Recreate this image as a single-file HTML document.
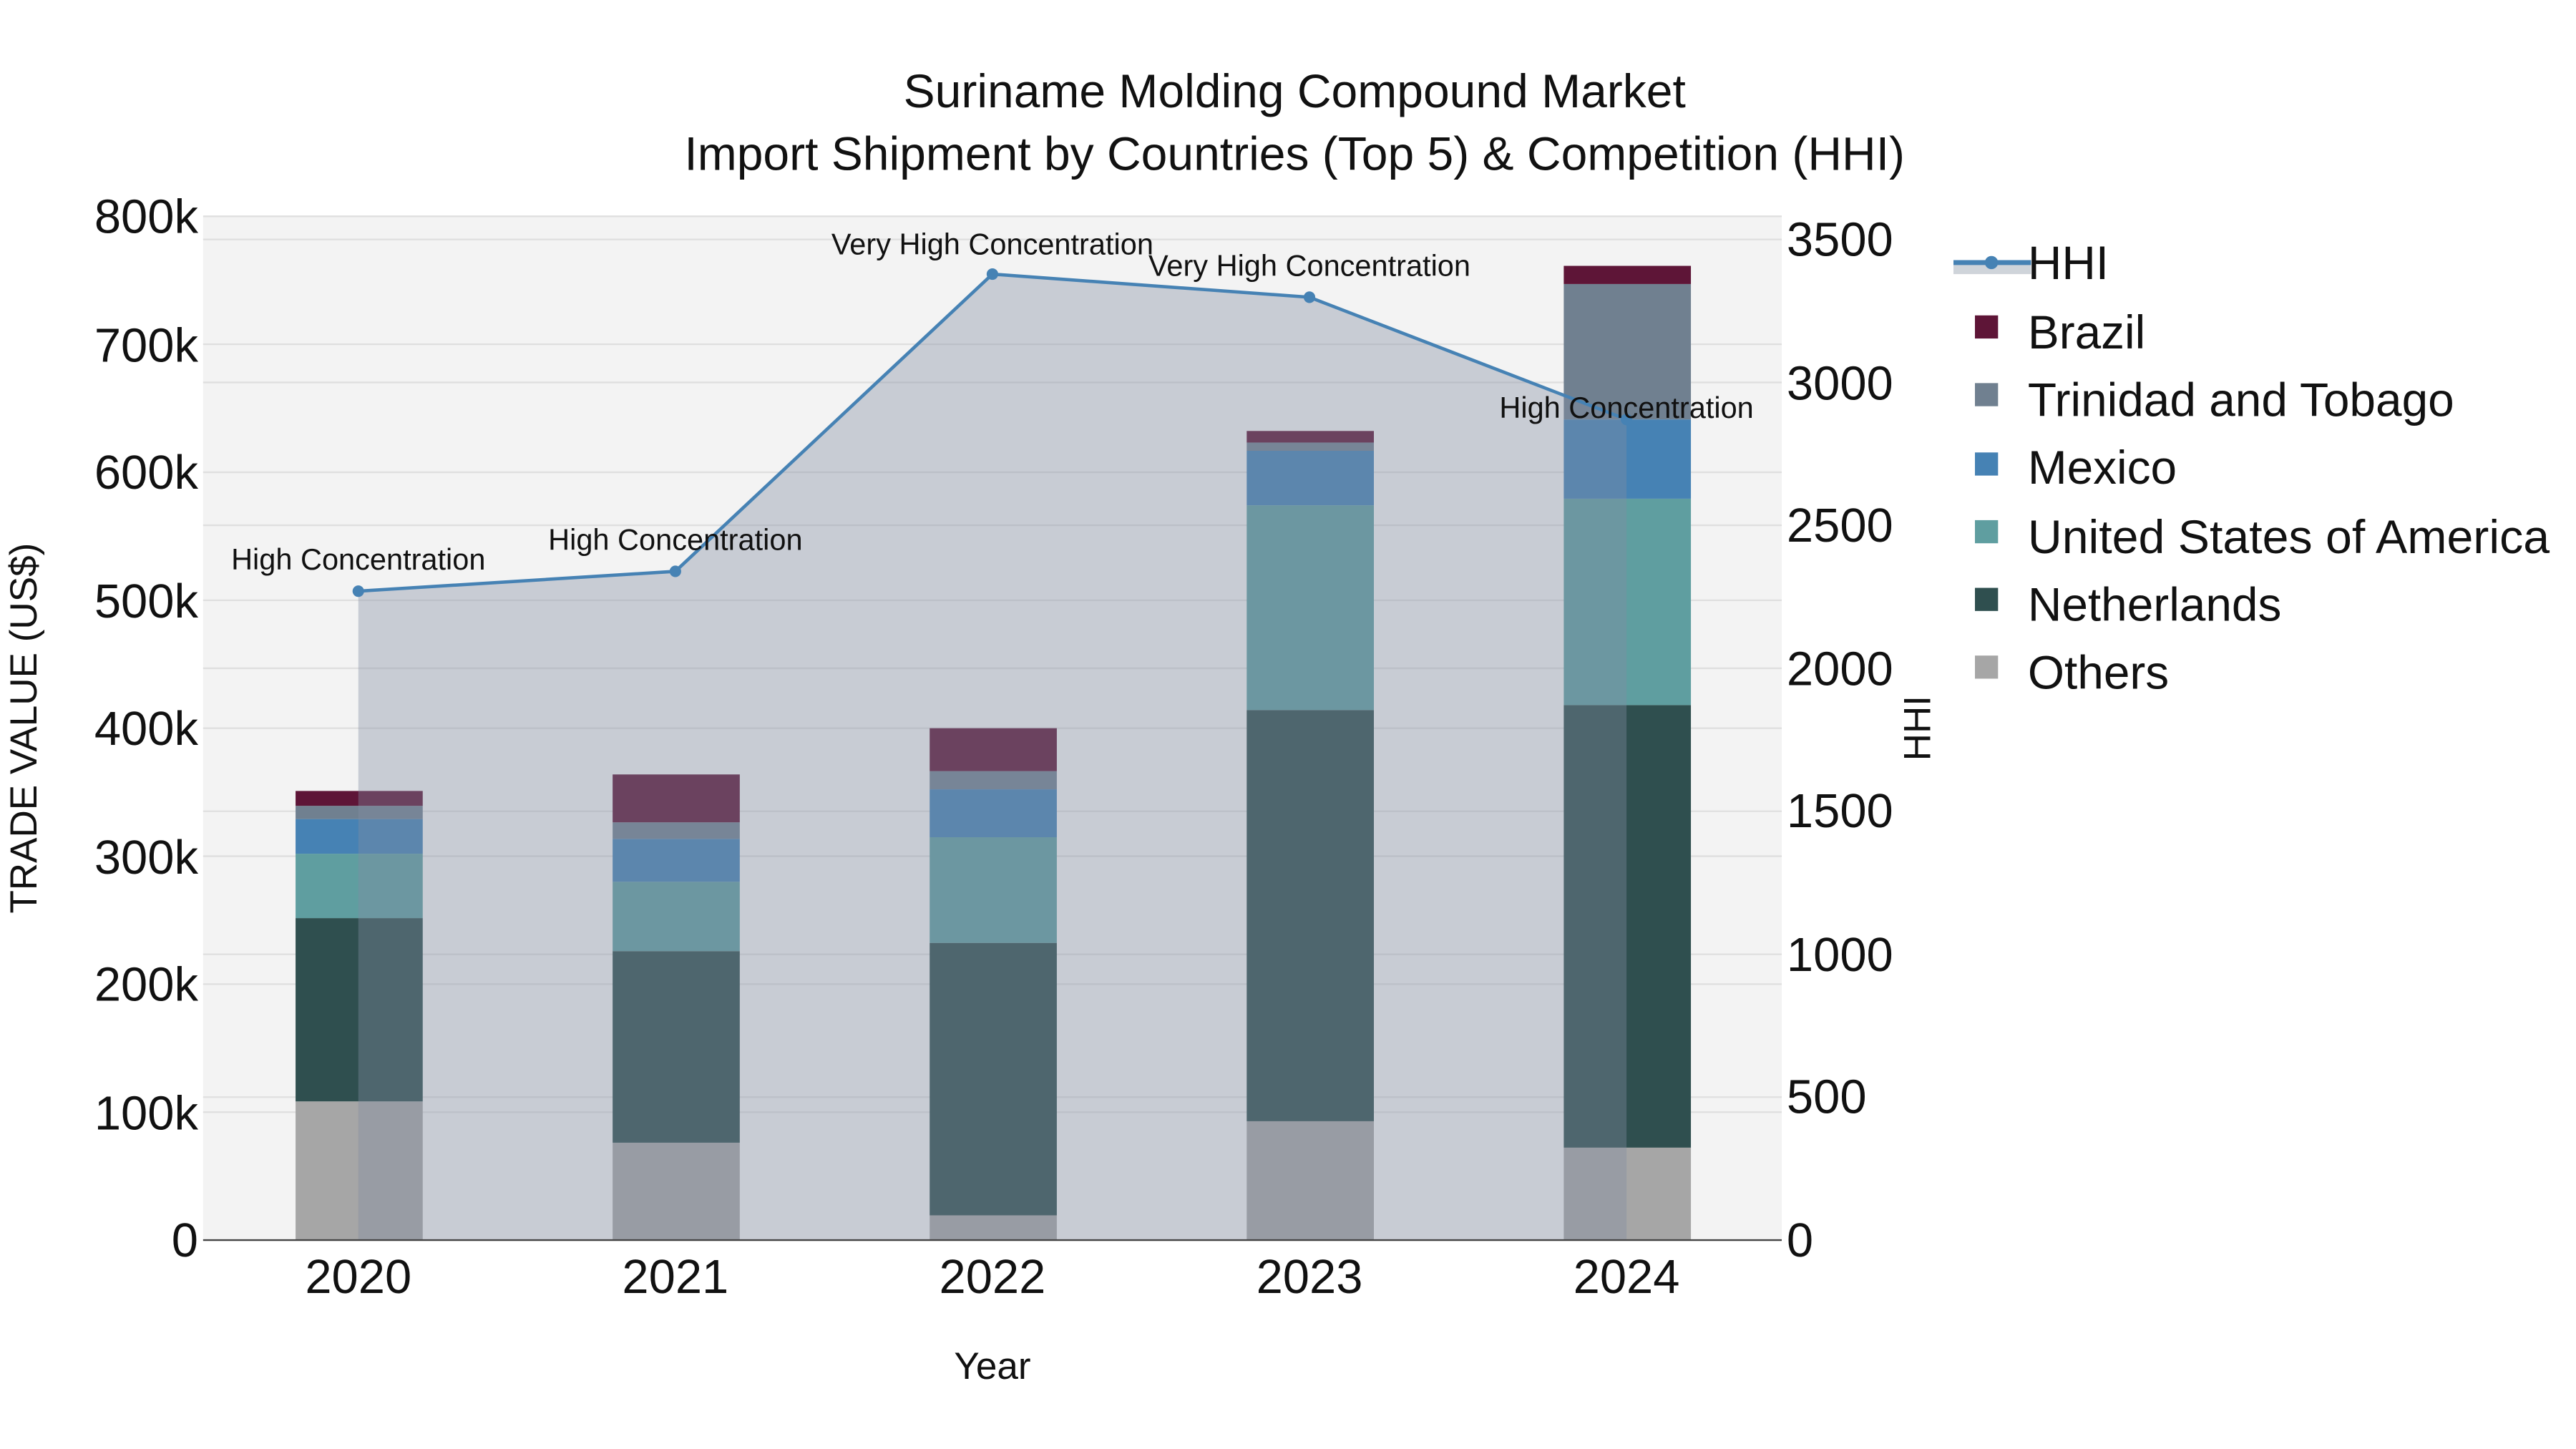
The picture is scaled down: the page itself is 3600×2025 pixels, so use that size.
<!DOCTYPE html>
<html><head><meta charset="utf-8"><style>html,body{margin:0;padding:0;background:#fff}svg{display:block}text{font-family:"Liberation Sans",sans-serif;fill:#111}</style></head><body>
<svg width="3600" height="2025" viewBox="0 0 1560 877.5" xmlns="http://www.w3.org/2000/svg">
<rect x="0" y="0" width="1560" height="877.5" fill="#fff"/>
<rect x="123" y="131" width="956" height="620" fill="#f3f3f3"/>
<g stroke="#dfdfdf" stroke-width="1">
<line x1="123" x2="1079" y1="673.5" y2="673.5"/><line x1="123" x2="1079" y1="596" y2="596"/><line x1="123" x2="1079" y1="518.5" y2="518.5"/><line x1="123" x2="1079" y1="441" y2="441"/><line x1="123" x2="1079" y1="363.5" y2="363.5"/><line x1="123" x2="1079" y1="286" y2="286"/><line x1="123" x2="1079" y1="208.5" y2="208.5"/><line x1="123" x2="1079" y1="131" y2="131"/>
<line x1="123" x2="1079" y1="664.4" y2="664.4"/><line x1="123" x2="1079" y1="577.9" y2="577.9"/><line x1="123" x2="1079" y1="491.3" y2="491.3"/><line x1="123" x2="1079" y1="404.7" y2="404.7"/><line x1="123" x2="1079" y1="318.1" y2="318.1"/><line x1="123" x2="1079" y1="231.6" y2="231.6"/><line x1="123" x2="1079" y1="145" y2="145"/>
</g>
<g>
<rect x="179" y="667" width="77" height="84" fill="#a6a6a6"/><rect x="179" y="556" width="77" height="111" fill="#2f4f4f"/><rect x="179" y="517" width="77" height="39" fill="#5f9ea0"/><rect x="179" y="496" width="77" height="21" fill="#4682b4"/><rect x="179" y="488" width="77" height="8" fill="#708090"/><rect x="179" y="479" width="77" height="9" fill="#5e1537"/>
<rect x="371" y="692" width="77" height="59" fill="#a6a6a6"/><rect x="371" y="576" width="77" height="116" fill="#2f4f4f"/><rect x="371" y="534" width="77" height="42" fill="#5f9ea0"/><rect x="371" y="508" width="77" height="26" fill="#4682b4"/><rect x="371" y="498" width="77" height="10" fill="#708090"/><rect x="371" y="469" width="77" height="29" fill="#5e1537"/>
<rect x="563" y="736" width="77" height="15" fill="#a6a6a6"/><rect x="563" y="571" width="77" height="165" fill="#2f4f4f"/><rect x="563" y="507" width="77" height="64" fill="#5f9ea0"/><rect x="563" y="478" width="77" height="29" fill="#4682b4"/><rect x="563" y="467" width="77" height="11" fill="#708090"/><rect x="563" y="441" width="77" height="26" fill="#5e1537"/>
<rect x="755" y="679" width="77" height="72" fill="#a6a6a6"/><rect x="755" y="430" width="77" height="249" fill="#2f4f4f"/><rect x="755" y="306" width="77" height="124" fill="#5f9ea0"/><rect x="755" y="273" width="77" height="33" fill="#4682b4"/><rect x="755" y="268" width="77" height="5" fill="#708090"/><rect x="755" y="261" width="77" height="7" fill="#5e1537"/>
<rect x="947" y="695" width="77" height="56" fill="#a6a6a6"/><rect x="947" y="427" width="77" height="268" fill="#2f4f4f"/><rect x="947" y="302" width="77" height="125" fill="#5f9ea0"/><rect x="947" y="254" width="77" height="48" fill="#4682b4"/><rect x="947" y="172" width="77" height="82" fill="#708090"/><rect x="947" y="161" width="77" height="11" fill="#5e1537"/>
</g>
<polygon points="217,751 217,358 409,346 601,166 793,180 985,254 985,751" fill="rgb(129,142,161)" fill-opacity="0.377"/>
<polyline points="217,358 409,346 601,166 793,180 985,254" fill="none" stroke="#4682b4" stroke-width="2"/>
<g fill="#4682b4"><circle cx="217" cy="358" r="3.5"/><circle cx="409" cy="346" r="3.5"/><circle cx="601" cy="166" r="3.5"/><circle cx="793" cy="180" r="3.5"/><circle cx="985" cy="254" r="3.5"/></g>
<line x1="123" x2="1079" y1="751" y2="751" stroke="#444" stroke-width="1"/>
<g font-size="18" text-anchor="middle">
<text x="217" y="345">High Concentration</text><text x="409" y="333">High Concentration</text><text x="601" y="154">Very High Concentration</text><text x="793" y="167">Very High Concentration</text><text x="985" y="253">High Concentration</text>
</g>
<g font-size="28.6" text-anchor="middle">
<text x="784" y="65">Suriname Molding Compound Market</text>
<text x="784" y="103">Import Shipment by Countries (Top 5) &amp; Competition (HHI)</text>
</g>
<g font-size="29" text-anchor="end">
<text x="120" y="761">0</text><text x="120" y="684">100k</text><text x="120" y="606">200k</text><text x="120" y="529">300k</text><text x="120" y="451">400k</text><text x="120" y="374">500k</text><text x="120" y="296">600k</text><text x="120" y="219">700k</text><text x="120" y="141">800k</text>
</g>
<g font-size="29" text-anchor="start">
<text x="1082" y="761">0</text><text x="1082" y="674">500</text><text x="1082" y="588">1000</text><text x="1082" y="501">1500</text><text x="1082" y="415">2000</text><text x="1082" y="328">2500</text><text x="1082" y="242">3000</text><text x="1082" y="155">3500</text>
</g>
<g font-size="29" text-anchor="middle">
<text x="217" y="783">2020</text><text x="409" y="783">2021</text><text x="601" y="783">2022</text><text x="793" y="783">2023</text><text x="985" y="783">2024</text>
</g>
<text x="601" y="835" font-size="23" text-anchor="middle">Year</text>
<text transform="translate(22,441) rotate(-90)" font-size="23" text-anchor="middle">TRADE VALUE (US$)</text>
<text transform="translate(1169,441) rotate(-90)" font-size="23" text-anchor="middle">HHI</text>
<g>
<rect x="1183" y="159" width="47" height="7" fill="#cfd4da"/>
<line x1="1183" x2="1230" y1="159" y2="159" stroke="#4682b4" stroke-width="3"/>
<circle cx="1206" cy="159" r="4" fill="#4682b4"/>
<rect x="1196" y="191" width="14" height="14" fill="#5e1537"/>
<rect x="1196" y="232" width="14" height="14" fill="#708090"/>
<rect x="1196" y="274" width="14" height="14" fill="#4682b4"/>
<rect x="1196" y="315" width="14" height="14" fill="#5f9ea0"/>
<rect x="1196" y="356" width="14" height="14" fill="#2f4f4f"/>
<rect x="1196" y="397" width="14" height="14" fill="#a6a6a6"/>
</g>
<g font-size="28.5">
<text x="1228" y="169">HHI</text><text x="1228" y="211">Brazil</text><text x="1228" y="252">Trinidad and Tobago</text><text x="1228" y="293">Mexico</text><text x="1228" y="335" textLength="316" lengthAdjust="spacingAndGlyphs">United States of America</text><text x="1228" y="376">Netherlands</text><text x="1228" y="417">Others</text>
</g>
</svg>
</body></html>
